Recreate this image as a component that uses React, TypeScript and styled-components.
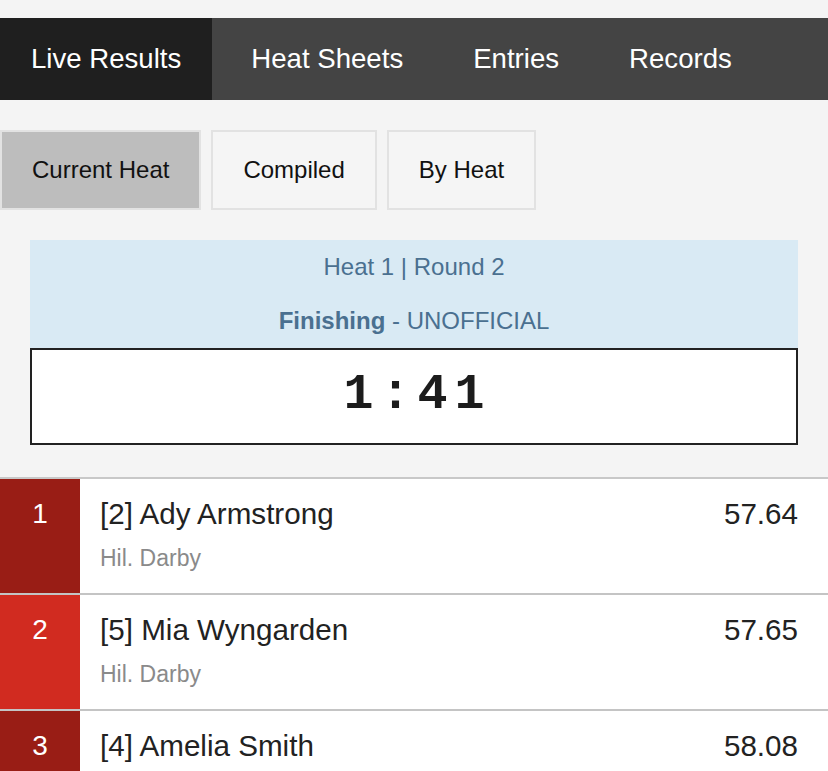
import React from 'react'
import styled, { createGlobalStyle } from 'styled-components'

const GlobalStyle = createGlobalStyle`
  html, body {
    margin: 0;
    padding: 0;
    background: #f4f4f4;
    font-family: 'Liberation Sans', Arial, Helvetica, sans-serif;
  }
  * {
    box-sizing: border-box;
  }
`

const Page = styled.div`
  padding-top: 18px;
  min-height: 771px;
  overflow: hidden;
`

const NavBar = styled.nav`
  display: flex;
  gap: 8px;
  height: 82px;
  background: #444444;
`

const NavItem = styled.a<{ $active?: boolean }>`
  display: flex;
  align-items: center;
  padding: 0 31px;
  font-size: 27.6px;
  color: #ffffff;
  text-decoration: none;
  background: ${(p) => (p.$active ? '#1f1f1f' : 'transparent')};
`

const SubTabs = styled.div`
  display: flex;
  gap: 10px;
  margin-top: 30px;
`

const SubTab = styled.button<{ $active?: boolean }>`
  height: 80px;
  padding: 0 30px;
  border: 2px solid #e2e2e2;
  background: ${(p) => (p.$active ? '#bdbdbd' : '#f5f5f5')};
  font-family: inherit;
  font-size: 24px;
  color: #111111;
  cursor: pointer;
`

const HeatPanel = styled.section`
  margin: 30px 30px 0;
`

const HeatInfo = styled.div`
  background: #d9eaf4;
  color: #4a7090;
  text-align: center;
  font-size: 24px;
  line-height: 30px;
  padding: 12px 0 12px;
`

const InfoLine = styled.div<{ $gap?: number }>`
  margin-top: ${(p) => p.$gap ?? 0}px;
`

const Clock = styled.div`
  display: flex;
  align-items: center;
  justify-content: center;
  height: 97px;
  padding: 0 0 4px 7px;
  background: #ffffff;
  border: 2px solid #222222;
  font-family: 'Liberation Mono', 'Courier New', monospace;
  font-weight: bold;
  font-size: 50px;
  letter-spacing: 7px;
  color: #1c1c1c;
`

const Results = styled.div`
  margin-top: 32px;
  border-top: 2px solid #c8c8c8;
`

const Row = styled.div`
  display: flex;
  height: 116px;
  background: #ffffff;
  border-bottom: 2px solid #c4c4c4;
`

const Place = styled.div<{ $color: string }>`
  width: 80px;
  flex-shrink: 0;
  background: ${(p) => p.$color};
  color: #ffffff;
  font-size: 28px;
  line-height: 34px;
  text-align: center;
  padding-top: 18px;
`

const Body = styled.div`
  flex: 1;
  padding: 18px 30px 0 20px;
`

const TopLine = styled.div`
  display: flex;
  justify-content: space-between;
  font-size: 29.6px;
  line-height: 34px;
  color: #222222;
`

const Team = styled.div`
  margin-top: 13px;
  font-size: 23px;
  line-height: 28px;
  color: #8a8a8a;
`

const results = [
  { place: 1, lane: 2, name: 'Ady Armstrong', team: 'Hil. Darby', time: '57.64', color: '#991d15' },
  { place: 2, lane: 5, name: 'Mia Wyngarden', team: 'Hil. Darby', time: '57.65', color: '#d12b20' },
  { place: 3, lane: 4, name: 'Amelia Smith', team: 'Hil. Darby', time: '58.08', color: '#991d15' },
]

const App: React.FC = () => {
  return (
    <Page>
      <GlobalStyle />
      <NavBar>
        <NavItem $active>Live Results</NavItem>
        <NavItem>Heat Sheets</NavItem>
        <NavItem>Entries</NavItem>
        <NavItem>Records</NavItem>
      </NavBar>

      <SubTabs>
        <SubTab $active>Current Heat</SubTab>
        <SubTab>Compiled</SubTab>
        <SubTab>By Heat</SubTab>
      </SubTabs>

      <HeatPanel>
        <HeatInfo>
          <InfoLine>Heat 1 | Round 2</InfoLine>
          <InfoLine $gap={24}>
            <b>Finishing</b> - UNOFFICIAL
          </InfoLine>
        </HeatInfo>
        <Clock>1:41</Clock>
      </HeatPanel>

      <Results>
        {results.map((r) => (
          <Row key={r.place}>
            <Place $color={r.color}>{r.place}</Place>
            <Body>
              <TopLine>
                <span>
                  [{r.lane}] {r.name}
                </span>
                <span>{r.time}</span>
              </TopLine>
              <Team>{r.team}</Team>
            </Body>
          </Row>
        ))}
      </Results>
    </Page>
  )
}

export default App
